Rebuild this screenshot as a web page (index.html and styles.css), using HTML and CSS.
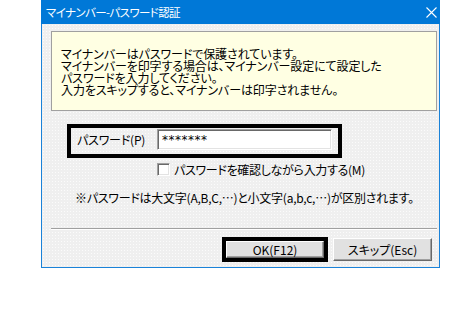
FILE: index.html
```html
<!DOCTYPE html>
<html lang="ja">
<head>
    <meta charset="UTF-8">
    <title>マイナンバー-パスワード認証</title>
    <link rel="stylesheet" href="styles.css">
</head>
<body>

    <div class="window">
        <div class="titlebar">
            <span class="title">マイナンバー-パスワード認証</span>
            <svg class="close" width="11" height="11" viewBox="0 0 11 11">
                <path d="M0.5 0.5 L10.5 10.5 M10.5 0.5 L0.5 10.5" stroke="#fff" stroke-width="1.1" fill="none"/>
            </svg>
        </div>

        <div class="client">
            <div class="notice">
                マイナンバーはパスワードで保護されています。<br>
                マイナンバーを印字する場合は、マイナンバー設定にて設定した<br>
                パスワードを入力してください。<br>
                入力をスキップすると、マイナンバーは印字されません。
            </div>

            <div class="pw-group">
                <span class="pw-label">パスワード(P)</span>
                <div class="pw-input">*******</div>
            </div>

            <div class="check-row">
                <span class="checkbox"></span>
                <span class="check-label">パスワードを確認しながら入力する(M)</span>
            </div>

            <p class="hint">※パスワードは大文字(A,B,C,…)と小文字(a,b,c,…)が区別されます。</p>

            <div class="separator"></div>

            <div class="buttons">
                <div class="focus-frame">
                    <button class="win-button ok-button">OK(F12)</button>
                </div>
                <button class="win-button skip-button">スキップ(Esc)</button>
            </div>
        </div>
    </div>

</body>
</html>
```

FILE: styles.css
```css
body {
    margin: 0;
    background-color: #fff;
    font-family: 'Noto Sans CJK JP', 'Liberation Sans', sans-serif;
    font-size: 12px;
    font-feature-settings: "palt";
    color: #000;
}

.window {
    margin-left: 41px;
    width: 399px;
    height: 268px;
    box-sizing: border-box;
    border: 1px solid #1a82d8;
    border-top: 0;
    display: flex;
    flex-direction: column;
}

.titlebar {
    height: 24px;
    margin: 0 -1px;
    padding: 0 3px 0 5px;
    background-color: #0078d7;
    color: #fff;
    display: flex;
    align-items: center;
    justify-content: space-between;
}

.title {
    font-size: 11.5px;
    letter-spacing: -0.6px;
}

.close {
    display: block;
}

.client {
    flex: 1;
    background-color: #efefef;
    background-image: radial-gradient(circle, #fbfbfb 0.6px, transparent 0.8px);
    background-size: 3px 3px;
    display: flex;
    flex-direction: column;
}

.notice {
    margin: 7px 0 0 9px;
    width: 386px;
    height: 80px;
    box-sizing: border-box;
    padding: 16px 0 0 9px;
    border: 1px solid #a0a0a0;
    background-color: #ffffe3;
    line-height: 12px;
    letter-spacing: -0.1px;
}

.pw-group {
    margin: 13px 0 0 25px;
    width: 275px;
    height: 34px;
    box-sizing: border-box;
    border: 4px solid #000;
    padding: 0 6px 4px 6px;
    display: flex;
    align-items: center;
}

.pw-label {
    width: 80px;
    letter-spacing: -0.2px;
}

.pw-input {
    width: 175px;
    height: 21px;
    box-sizing: border-box;
    border: 1px solid;
    border-color: #a0a0a0 #fff #fff #a0a0a0;
    box-shadow: inset 1px 1px 0 #696969, inset -1px -1px 0 #e3e3e3;
    background-color: #fff;
    padding: 1px 0 0 4px;
    font-family: 'DejaVu Sans', sans-serif;
    font-size: 12px;
    letter-spacing: 0.5px;
    line-height: 18px;
}

.check-row {
    margin: 5px 0 0 115px;
    display: flex;
    align-items: center;
    gap: 4px;
    height: 13px;
}

.check-label {
    letter-spacing: -0.3px;
}

.checkbox {
    width: 13px;
    height: 13px;
    box-sizing: border-box;
    border: 1px solid;
    border-color: #a0a0a0 #fff #fff #a0a0a0;
    box-shadow: inset 1px 1px 0 #696969, inset -1px -1px 0 #e3e3e3;
    background-color: #fff;
}

.hint {
    margin: 15px 0 0 33px;
    line-height: 14px;
    letter-spacing: -0.25px;
}

.separator {
    margin: 23px 0 0 9px;
    width: 386px;
    height: 1px;
    border-bottom: 1px solid #fff;
    background-color: #a0a0a0;
}

.buttons {
    margin: 7px 0 0 180px;
    display: flex;
    align-items: center;
    gap: 5px;
}

.focus-frame {
    border: 4px solid #000;
    width: 106px;
    height: 25px;
    box-sizing: border-box;
    display: flex;
}

.win-button {
    font-family: inherit;
    font-size: 12px;
    font-feature-settings: "palt";
    color: #000;
    background-color: #e1e1e1;
    border: 1px solid;
    border-color: #fff #696969 #696969 #fff;
    box-shadow: inset -1px -1px 0 #a0a0a0;
    padding: 0;
    margin: 0;
    line-height: 14px;
}

.ok-button {
    flex: 1;
}

.skip-button {
    width: 99px;
    height: 23px;
}
```
